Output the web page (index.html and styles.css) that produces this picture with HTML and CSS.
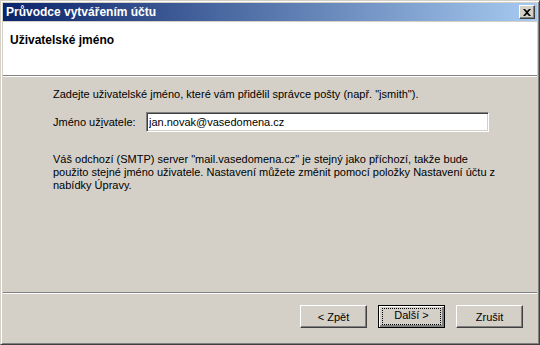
FILE: index.html
```html
<!DOCTYPE html>
<html lang="cs">
<head>
    <meta charset="UTF-8">
    <title>Průvodce vytvářením účtu</title>
    <link rel="stylesheet" href="styles.css">
</head>
<body>
    <div class="window">
        <div class="titlebar">
            <span class="title">Průvodce vytvářením účtu</span>
            <button class="close" type="button">
                <svg width="8" height="7" viewBox="0 0 8 7">
                    <path d="M0 0h2l2 2 2-2h2L5 3.5 8 7H6L4 5 2 7H0l3-3.5z" fill="#000"/>
                </svg>
            </button>
        </div>

        <div class="page-header">
            <h1>Uživatelské jméno</h1>
        </div>

        <div class="content">
            <p class="intro">Zadejte uživatelské jméno, které vám přidělil správce pošty (např. "jsmith").</p>
            <div class="field">
                <label for="username">Jméno už<u>i</u>vatele:</label>
                <input id="username" type="text" value="jan.novak@vasedomena.cz">
            </div>
            <p class="note">Váš odchozí (SMTP) server "mail.vasedomena.cz" je stejný jako příchozí, takže bude<br>
            použito stejné jméno uživatele. Nastavení můžete změnit pomocí položky Nastavení účtu z<br>
            nabídky Úpravy.</p>
        </div>

        <div class="buttons">
            <button type="button" class="btn">&lt; Zpět</button>
            <button type="button" class="btn default"><span>Další &gt;</span></button>
            <button type="button" class="btn">Zrušit</button>
        </div>
    </div>
</body>
</html>
```

FILE: styles.css
```css
* {
    box-sizing: border-box;
}

body {
    margin: 0;
    background: #d4d0c8;
    font-family: 'Liberation Sans', Arial, sans-serif;
    font-size: 11px;
    color: #000;
}

.window {
    width: 540px;
    height: 345px;
    display: flex;
    flex-direction: column;
    background: #d4d0c8;
    border-top: 1px solid #d4d0c8;
    border-left: 1px solid #d4d0c8;
    border-right: 1px solid #404040;
    border-bottom: 1px solid #404040;
    box-shadow: inset 1px 1px 0 #fff, inset -1px -1px 0 #808080;
    padding: 2px;
}

.titlebar {
    height: 18px;
    display: flex;
    align-items: center;
    justify-content: space-between;
    padding: 0 2px 0 3px;
    background: linear-gradient(to right, #0a246a, #a6caf0);
}

.title {
    color: #fff;
    font-weight: bold;
    font-size: 12px;
}

.close {
    width: 16px;
    height: 14px;
    padding: 0;
    display: flex;
    align-items: center;
    justify-content: center;
    background: #d4d0c8;
    border: 1px solid;
    border-color: #fff #404040 #404040 #fff;
    box-shadow: inset -1px -1px 0 #808080;
}

.page-header {
    height: 54px;
    margin-top: 1px;
    background: #fff;
    border-bottom: 1px solid #808080;
    box-shadow: 0 1px 0 #fff;
    padding: 11px 0 0 7px;
}

.page-header h1 {
    margin: 0;
    font-size: 12px;
    font-weight: bold;
}

.content {
    flex: 1;
    padding: 12px 0 0 50px;
    border-bottom: 1px solid #808080;
    box-shadow: 0 1px 0 #fff;
}

.intro {
    margin: 0;
    line-height: 13px;
}

.field {
    display: flex;
    align-items: center;
    margin-top: 11px;
}

.field label {
    width: 93px;
}

.field input {
    width: 343px;
    height: 20px;
    padding: 1px 2px;
    font-family: inherit;
    font-size: 11px;
    background: #fff;
    border: 1px solid;
    border-color: #808080 #fff #fff #808080;
    box-shadow: inset 1px 1px 0 #404040, inset -1px -1px 0 #d4d0c8;
    outline: none;
}

.note {
    margin: 21px 0 0;
    line-height: 13px;
}

.buttons {
    height: 49px;
    display: flex;
    justify-content: flex-end;
    gap: 11px;
    padding: 12px 14px 0 0;
}

.btn {
    width: 67px;
    height: 23px;
    padding: 0;
    font-family: inherit;
    font-size: 11px;
    color: #000;
    background: #d4d0c8;
    border: 1px solid;
    border-color: #fff #404040 #404040 #fff;
    box-shadow: inset -1px -1px 0 #808080;
}

.btn.default {
    border: 1px solid #000;
    box-shadow: inset 1px 1px 0 #fff, inset -2px -2px 0 #808080;
}

.btn.default span {
    display: inline-block;
    width: 57px;
    height: 15px;
    line-height: 13px;
    outline: 1px dotted #000;
}
```
